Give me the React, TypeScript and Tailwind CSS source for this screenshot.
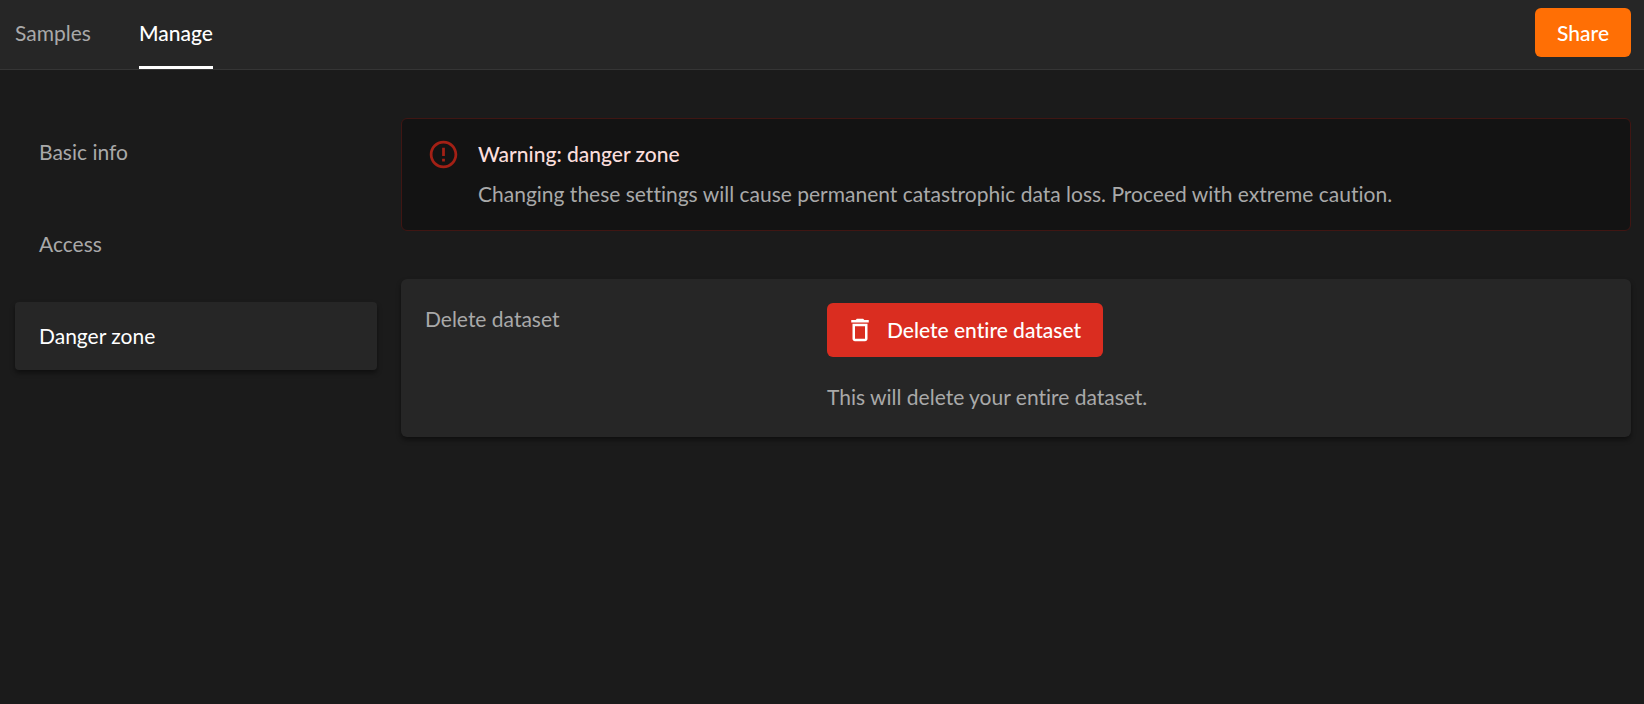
const navItems = [
  { label: "Basic info", active: false },
  { label: "Access", active: false },
  { label: "Danger zone", active: true },
];

function WarningIcon() {
  return (
    <svg viewBox="0 0 24 24" className="h-[33px] w-[33px] shrink-0" fill="#a32015" aria-hidden="true">
      <path d="M11 15h2v2h-2v-2zm0-8h2v6h-2V7zm.99-5C6.47 2 2 6.48 2 12s4.47 10 9.99 10C17.52 22 22 17.52 22 12S17.52 2 11.99 2zM12 20c-4.42 0-8-3.58-8-8s3.58-8 8-8 8 3.58 8 8-3.58 8-8 8z" />
    </svg>
  );
}

function TrashIcon() {
  return (
    <svg viewBox="0 0 24 24" className="h-[30px] w-[30px] shrink-0" fill="currentColor" aria-hidden="true">
      <path d="M6 19c0 1.1.9 2 2 2h8c1.1 0 2-.9 2-2V7H6v12zM8 9h8v10H8V9zm7.5-5l-1-1h-5l-1 1H5v2h14V4z" />
    </svg>
  );
}

export default function App() {
  return (
    <div className="min-h-screen bg-[#1b1b1b] font-['Lato',sans-serif] text-[21px] leading-8 text-[#a9a9a9] [font-variant-ligatures:no-common-ligatures]">
      <header className="flex items-start justify-between border-b border-[#353535] bg-[#262626] pr-[13px] pl-[15px]">
        <nav className="flex gap-12" aria-label="Dataset">
          <a href="#samples" className="border-b-3 border-transparent py-[17px]">
            Samples
          </a>
          <a href="#manage" aria-current="page" className="border-b-3 border-white py-[17px] font-medium text-white">
            Manage
          </a>
        </nav>
        <button type="button" className="mt-2 rounded-md bg-[#ff6f05] px-[22px] pt-[9px] pb-2 font-medium text-white">
          Share
        </button>
      </header>
      <div className="grid grid-cols-[362px_1fr] items-start gap-6 pt-12 pr-[13px] pb-12 pl-[15px]">
        <nav className="flex flex-col gap-6" aria-label="Settings">
          {navItems.map((item) => (
            <a
              key={item.label}
              href="#"
              aria-current={item.active ? "page" : undefined}
              className={
                item.active
                  ? "rounded-sm bg-[#262626] px-6 py-[18px] text-white shadow-[0_3px_5px_rgba(0,0,0,0.45)]"
                  : "px-6 py-[18px]"
              }
            >
              {item.label}
            </a>
          ))}
        </nav>
        <main className="flex flex-col gap-12">
          <section className="flex gap-[18px] rounded-md border border-[#401613] bg-[#131313] pt-[19px] pr-6 pb-5 pl-[25px]">
            <WarningIcon />
            <div className="flex flex-col gap-2">
              <h2 className="font-medium text-[#fbdedc]">Warning: danger zone</h2>
              <p>Changing these settings will cause permanent catastrophic data loss. Proceed with extreme caution.</p>
            </div>
          </section>
          <section className="grid grid-cols-3 gap-6 rounded-md bg-[#262626] p-6 shadow-[0_3px_5px_rgba(0,0,0,0.45)]">
            <h2>Delete dataset</h2>
            <div className="col-span-2 flex flex-col items-start gap-6">
              <button
                type="button"
                className="flex items-center gap-3 rounded-md bg-[#da2d20] py-[11px] pr-[22px] pl-[18px] font-medium text-white"
              >
                <TrashIcon />
                Delete entire dataset
              </button>
              <p>This will delete your entire dataset.</p>
            </div>
          </section>
        </main>
      </div>
    </div>
  );
}
